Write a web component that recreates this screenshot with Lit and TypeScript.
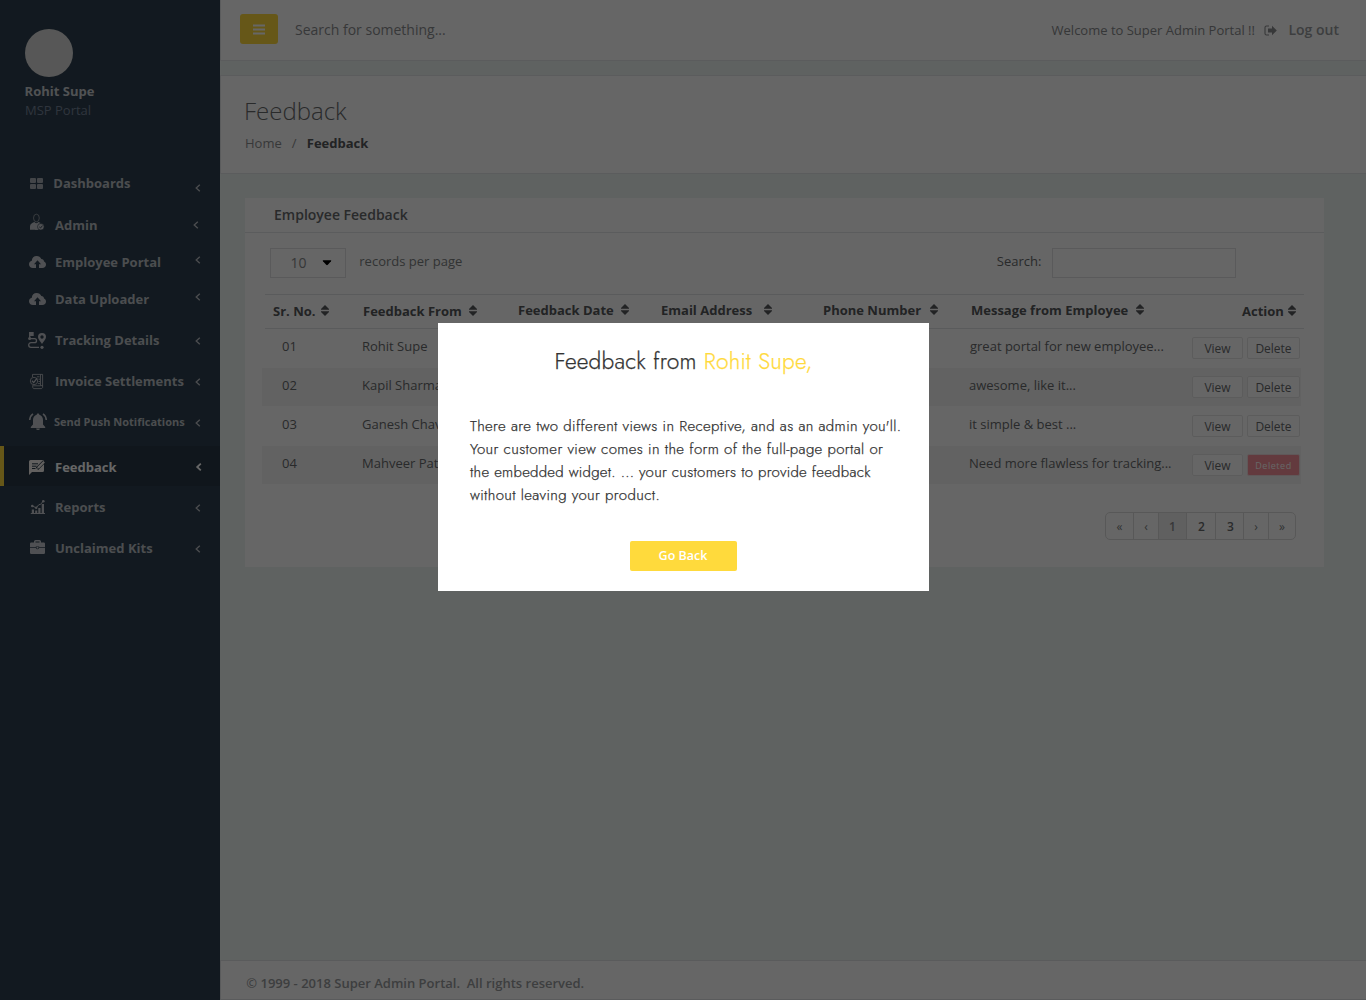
import { LitElement, html, css, svg } from 'lit';
import { customElement, state } from 'lit/decorators.js';
import { classMap } from 'lit/directives/class-map.js';

const cloud = svg`<path fill="currentColor" fill-rule="evenodd" d="M5 16C2.6 16 1 14.5 1 12.300C1 10.500 2.100 9.200 3.800 8.800C3.900 6 5.900 4 8.700 4C10.800 4 12.500 5.100 13.300 6.900C14.900 6.900 16 8 16 9.500C17.300 10 18 11 18 12.500C18 14.600 16.500 16 14.300 16H11V12.300H13L9.500 8.300L6 12.300H8V16Z"/>`;

const icons = {
  grid: svg`<g fill="currentColor" opacity=".8"><rect x="2" y="5" width="6" height="5" rx="1"/><rect x="9" y="5" width="6" height="5" rx="1"/><rect x="2" y="11" width="6" height="5" rx="1"/><rect x="9" y="11" width="6" height="5" rx="1"/></g>`,
  admin: svg`<ellipse cx="8.400" cy="3" rx="2.900" ry="3.800" fill="none" stroke="currentColor" stroke-width=".6"/><path fill="currentColor" d="M2 14.800V11.500C2 8.800 4 8.200 6.300 7L8.400 8.600L10.500 7L12.600 8C10 8.400 8.600 10.300 9 12.300C9.100 13.300 9.700 14.200 10.500 14.800Z"/><path fill="currentColor" d="M8 8.500L12 8.300L10.500 14.800H7Z"/><circle cx="12.800" cy="11.800" r="3.300" fill="currentColor" stroke="#2f4050" stroke-width=".6"/><path d="M11.300 11.900L12.500 13L14.500 10.600" fill="none" stroke="#2f4050" stroke-width=".9"/>`,
  cloud,
  track: svg`<g fill="none" stroke="currentColor" stroke-width="1.300"><path d="M1.700 2V9.500M3 8.700H6.500A2 2 0 0 1 6.500 12.700H3A2.250 2.250 0 0 0 3 17.300H11"/></g><path fill="currentColor" d="M1.500 2H5.700V6H1.500Z"/><circle cx="1.600" cy="8.600" r="1.500" fill="currentColor"/><path fill="currentColor" fill-rule="evenodd" d="M14 3A4 4 0 0 0 10 7C10 9.500 12.700 11.500 14 14C15.300 11.500 18 9.500 18 7A4 4 0 0 0 14 3ZM14 5.300A1.700 1.700 0 1 1 14 8.700A1.700 1.700 0 0 1 14 5.300Z"/><circle cx="14" cy="17.300" r="1.600" fill="currentColor"/>`,
  invoice: svg`<g fill="none" stroke="currentColor" stroke-width=".8"><path d="M4.500 6V3.400H14.600V16.500L13.600 17.600H5.800C4.800 17.400 4.700 16.500 4.600 14.500M12.500 3.400V14.600H14.600M4.600 14.800H12.500"/><circle cx="6" cy="10" r="3.700"/><path stroke-width="1.300" d="M4 9.800L5.700 11.600L9 7.400"/><path d="M9 5.800H11.500M10.500 8.200H12M10.500 10.500H12M10 12.600H12"/></g>`,
  bell: svg`<g fill="currentColor"><path d="M10 1.500C10.800 1.500 11.200 2 11.300 2.800C13.700 3.500 15 5.400 15 8V12.500L17.200 15V16H2.800V15L5 12.500V8C5 5.400 6.300 3.500 8.700 2.800C8.800 2 9.200 1.500 10 1.500Z"/><path d="M8.100 16.600H11.900A1.900 1.500 0 0 1 8.100 16.600Z"/></g><path d="M5 1.800Q2 3.800 1.700 8M15 1.800Q18 3.800 18.300 8" fill="none" stroke="currentColor" stroke-width="1.600"/>`,
  feedback: svg`<path fill="currentColor" d="M2.500 3H14.500Q16 3 16 4.500V13.500Q16 15 14.500 15H4L1 18V4.500Q1 3 2.500 3Z"/><path d="M4 6.800H10M4 9.200H8.500M4 11.500H7.500" stroke="#293846" stroke-width="1" fill="none"/><path d="M9 11.800L16 4.800" stroke="#293846" stroke-width="3.400" fill="none"/><path d="M9 11.800L9.600 9.700L15.300 4L16.900 5.600L11.200 11.300Z" fill="currentColor"/>`,
  chart: svg`<g fill="currentColor"><path d="M2.800 16H17V17H2.800ZM3.800 12.500H6V17H3.800ZM7.200 13.500H9.200V17H7.200ZM10.300 11H12.500V17H10.300ZM13.700 7H16V17H13.700Z"/><circle cx="4.300" cy="9" r="1.300"/><circle cx="8.200" cy="10.800" r="1.200"/><circle cx="15.300" cy="4.200" r="1.300"/></g><path d="M4.300 9L8.200 10.800L11 7.500L12.200 7.700L15.300 4.200" fill="none" stroke="currentColor" stroke-width="1"/>`,
  case: svg`<path fill="currentColor" fill-rule="evenodd" d="M6 4.500V3.500Q6 2 7.500 2H11.500Q13 2 13 3.500V4.500H15.800Q17 4.500 17 5.700V9H11.200V8.500H7.800V9H2V5.700Q2 4.500 3.200 4.500ZM7.500 4.500H11.500V3.400H7.500Z"/><path fill="currentColor" d="M2 9.700H7.800Q8 11.300 9.500 11.300T11.200 9.700H17V14.800Q17 16 15.800 16H3.200Q2 16 2 14.800Z"/><rect x="8.600" y="9" width="1.800" height="1.600" fill="currentColor"/>`,
};

type IconName = keyof typeof icons;

const menu: { label: string; icon: IconName; active?: boolean }[] = [
  { label: 'Dashboards', icon: 'grid' },
  { label: 'Admin', icon: 'admin' },
  { label: 'Employee Portal', icon: 'cloud' },
  { label: 'Data Uploader', icon: 'cloud' },
  { label: 'Tracking Details', icon: 'track' },
  { label: 'Invoice Settlements', icon: 'invoice' },
  { label: 'Send Push Notifications', icon: 'bell' },
  { label: 'Feedback', icon: 'feedback', active: true },
  { label: 'Reports', icon: 'chart' },
  { label: 'Unclaimed Kits', icon: 'case' },
];

const columns = ['Sr. No.', 'Feedback From', 'Feedback Date', 'Email Address', 'Phone Number', 'Message from Employee', 'Action'];

const rows = [
  { no: '01', from: 'Rohit Supe', message: 'great portal for new employee...' },
  { no: '02', from: 'Kapil Sharma', message: 'awesome, like it...' },
  { no: '03', from: 'Ganesh Chavan', message: 'it simple & best ...' },
  { no: '04', from: 'Mahveer Patil', message: 'Need more flawless for tracking...', deleted: true },
];

@customElement('side-menu')
export class SideMenu extends LitElement {
  static styles = css`
    :host { display: block; width: 220px; background: #2f4050; font: 700 13px/18px 'Open Sans', sans-serif; }
    .profile { padding: 28.500px 24px 0 24px; height: 134.500px; }
    .avatar { width: 48px; height: 48px; border-radius: 50%; background: #d9d9d9; margin: 0 0 5.500px 1px; }
    .name { padding-left: .6px; color: #c9ccd1; }
    .role { padding: 1px 0 0 1px; color: #76849a; font-weight: 400; }
    nav { display: flex; flex-direction: column; }
    .item { display: flex; align-items: center; box-sizing: border-box; padding: 0 17px 0 28px; height: 44px; color: #bcc0c6; }
    .item:nth-child(1) { height: 40px; }
    .item:nth-child(3) { height: 30px; }
    .item:nth-child(5), .item:nth-child(7) { height: 38px; }
    .item:nth-child(9) { height: 42px; }
    .item:nth-child(10) { height: 40px; }
    .item.active { height: 40px; margin-top: 5px; padding: 2px 16.500px 0 24px; border-left: 4px solid #ffda3c; background: #293846; color: #fff; }
    .icon { width: 20px; height: 20px; overflow: visible; flex: none; color: #c6c9cf; }
    .active .icon { color: #f4f1ee; }
    .label { flex: 1; padding-left: 7px; white-space: nowrap; }
    .item:nth-child(1) .label { padding-left: 5.300px; }
    .item:nth-child(7) .label { padding-left: 6px; font-size: 11px; }
    .arrow { width: 9px; height: 10px; flex: none; }
    .item:nth-child(1) .arrow { margin-top: 10px; }
    .item:nth-child(2) .arrow { margin-right: 2px; }
    .item:nth-child(3) .arrow, .item:nth-child(4) .arrow { margin-bottom: 4px; }
    .item:nth-child(n+5) .arrow { margin-top: 2px; }
    .item.active .arrow { margin-top: 0; stroke-width: 1.800; }
  `;

  render() {
    return html`
      <div class="profile">
        <div class="avatar"></div>
        <div class="name">Rohit Supe</div>
        <div class="role">MSP Portal</div>
      </div>
      <nav>
        ${menu.map((m) => html`
          <div class=${classMap({ item: true, active: !!m.active })}>
            <svg class="icon" viewBox="0 0 20 20">${icons[m.icon]}</svg>
            <span class="label">${m.label}</span>
            <svg class="arrow" viewBox="0 0 9 10" stroke-width="1.300"><path d="M5.800 1.700L2.200 5L5.800 8.300" fill="none" stroke="currentColor"/></svg>
          </div>`)}
      </nav>`;
  }
}

@customElement('feedback-table')
export class FeedbackTable extends LitElement {
  static styles = css`
    :host { display: block; font: 400 13px/18px 'Open Sans', sans-serif; color: #676a6c; }
    .head { display: grid; grid-template-columns: 90px 155px 143px 162px 148px 271px 1fr; box-sizing: border-box;
      margin: 0 20px; padding-left: 8px; height: 35px; border: solid #e2e4e5; border-width: 1px 0; font-weight: 700; color: #55585a; }
    .col { display: flex; align-items: flex-start; padding-top: 6px; white-space: nowrap; }
    .col:nth-child(1), .col:nth-child(2), .col:nth-child(7) { padding-top: 7px; }
    .sort { width: 8px; height: 11px; margin: 3px 0 0 7.500px; flex: none; }
    .col:nth-child(1) .sort { margin-left: 5.300px; }
    .col:nth-child(4) .sort { margin-left: 11.800px; }
    .col:nth-child(5) .sort { margin-left: 8.800px; }
    .col:nth-child(6) .sort { margin-left: 8.200px; }
    .col:nth-child(7) .sort { margin-left: 4px; }
    .row { display: grid; grid-template-columns: 80px 607px 223px 1fr; align-items: start; box-sizing: border-box;
      margin: 0 23px 0 17px; padding: 8px 0 0 20px; height: 38px; white-space: nowrap; }
    .row.first { height: 39px; }
    .row.first .msg { padding-left: 1px; }
    .row.third { height: 40px; padding-top: 9px; }
    .row.even { background: #f6f6f6; }
    .actions { display: flex; gap: 4px; }
    .btn { box-sizing: border-box; width: 51px; height: 22px; border: 1px solid #e7e7e7; border-radius: 2px; background: #fff;
      font-size: 12px; line-height: 17px; padding-top: 2px; text-align: center; }
    .btn.del { width: 53px; }
    .btn.gone { background: #f7929b; border-color: #efdcde; color: #fff; font-size: 9px; letter-spacing: .55px; }
  `;

  render() {
    return html`
      <div class="head">
        ${columns.map((c) => html`<div class="col">${c}<svg class="sort" viewBox="0 0 8 11"><path fill="currentColor" d="M4 0L8 4V4.800H0V4ZM4 11L8 7V6.200H0V7Z"/></svg></div>`)}
      </div>
      ${rows.map((r, i) => html`
        <div class=${classMap({ row: true, first: i === 0, third: i === 2, even: i % 2 === 1 })}>
          <span>${r.no}</span><span>${r.from}</span><span class="msg">${r.message}</span>
          <div class="actions">
            <div class="btn">View</div>
            <div class=${classMap({ btn: true, del: true, gone: !!r.deleted })}>${r.deleted ? 'Deleted' : 'Delete'}</div>
          </div>
        </div>`)}`;
  }
}

@customElement('app-root')
export class AppRoot extends LitElement {
  static styles = css`
    :host { display: block; position: relative; height: 1000px; overflow: hidden; font: 400 13px/18px 'Open Sans', sans-serif; color: #676a6c; }
    .shell { display: flex; height: 1000px; background: #eef5f2; }
    main { flex: 1; display: flex; flex-direction: column; min-width: 0; }
    .topbar { display: flex; align-items: flex-start; box-sizing: border-box; height: 61px; padding: 14px 27px 0 19px; background: #fff;
      border: solid #e4e7e8; border-width: 0 0 1px 1px; }
    .burger { display: flex; align-items: center; justify-content: center; width: 38px; height: 30px; border-radius: 3px; background: #ffda3c; }
    .burger svg { width: 12px; height: 11px; }
    .search { flex: 1; padding: 6px 0 0 17px; font-size: 14px; line-height: 19px; color: #8b8d8f; }
    .welcome { padding-top: 7px; color: #888a8c; }
    .exit { width: 13px; height: 11px; margin: 11px 11px 0 9.500px; color: #8b8d8f; }
    .logout { padding-top: 6px; font-weight: 600; font-size: 14px; line-height: 19px; color: #999c9e; }
    .heading { box-sizing: border-box; height: 99px; margin-top: 14px; padding: 18px 0 0 24px; background: #fff;
      border: solid #e4e7e8; border-width: 1px 0 1px 1px; }
    h1 { margin: 0 0 7px -1px; font-weight: 300; font-size: 24px; line-height: 33px; }
    .crumbs { display: flex; color: #8b8d8f; }
    .slash { width: 25px; text-align: center; }
    .crumbs b { color: #55585a; }
    .card { box-sizing: border-box; width: 1079px; height: 369px; margin: 24px 0 0 25px; background: #fff; }
    .card h2 { box-sizing: border-box; height: 35px; margin: 0; padding: 7px 0 0 29px; border-bottom: 1px solid #e4e7e8; font-weight: 600; font-size: 14px; line-height: 19px; }
    .tools { display: flex; box-sizing: border-box; height: 61px; padding: 15px 88px 0 25px; }
    .select { display: flex; align-items: center; box-sizing: border-box; width: 76px; height: 30px; padding: 0 13.500px 0 19.500px; justify-content: space-between;
      border: 1px solid #e0e2e3; font-size: 14px; color: #888a8c; }
    .select svg { width: 10px; height: 6px; }
    .per { flex: 1; padding: 4px 0 0 13.300px; color: #7c7f81; }
    .find { padding: 4px 10.600px 0 0; }
    .field { box-sizing: border-box; width: 184px; height: 30px; border: 1px solid #e0e2e3; }
    .pager { display: flex; box-sizing: border-box; width: 191px; height: 28px; margin: 28px 0 0 860px; border: 1px solid #dcdcdc; border-radius: 5px;
      font-size: 12px; font-weight: 600; line-height: 27px; text-align: center; }
    .pager span { box-sizing: border-box; width: 28px; border-left: 1px solid #dcdcdc; }
    .pager span:first-child { border-left: 0; width: 27px; }
    .pager span:nth-child(2), .pager span:nth-child(6) { width: 25px; }
    .pager span:nth-child(4) { width: 29px; padding-left: 1px; }
    .pager span:nth-child(5) { padding-left: 2px; }
    .pager span:nth-child(7) { width: 27px; }
    .pager .on { background: #efefef; color: #8b8d8f; }
    .pager .nav { font-weight: 400; color: #7c7f81; }
    footer { box-sizing: border-box; height: 40px; margin-top: auto; padding: 13px 0 0 25.300px; background: #fff; border: solid #e0e4e5; border-width: 1px 0 1px 1px;
      font-weight: 600; color: #999c9e; white-space: pre; }
    .shade { position: absolute; inset: 0; background: rgba(0, 0, 0, .6); }
    .modal { position: absolute; left: 438px; top: 323px; display: flex; flex-direction: column; align-items: center; box-sizing: border-box; width: 491px; height: 268px;
      background: #fff; color: #333; font-family: 'Jost', 'Lato', sans-serif; font-weight: 300; }
    .title, .copy { -webkit-text-stroke: .25px currentColor; white-space: nowrap; }
    .title { margin-top: 23px; font-size: 22.800px; line-height: 32px; letter-spacing: .2px; }
    .title em { font-style: normal; color: #ffda3c; }
    .copy { align-self: stretch; margin: 37px 0 0 32px; font-size: 15px; line-height: 23px; letter-spacing: .37px; }
    .tight { letter-spacing: .275px; }
    .back { width: 107px; height: 30px; margin-top: 34px; border-radius: 2px; background: #ffda3c; color: #fff;
      font: 600 12.500px/29px 'Open Sans', sans-serif; text-align: center; text-indent: -1px; }
  `;

  @state() private open = true;

  render() {
    return html`
      <div class="shell">
        <side-menu></side-menu>
        <main>
          <div class="topbar">
            <div class="burger"><svg viewBox="0 0 12 11"><path fill="#fff" d="M0 .5H12V2.500H0ZM0 4.500H12V6.500H0ZM0 8.500H12V10.500H0Z"/></svg></div>
            <div class="search">Search for something...</div>
            <div class="welcome">Welcome to Super Admin Portal !!</div>
            <svg class="exit" viewBox="0 0 13 11"><path d="M5 1H2.500Q1 1 1 2.500V8.500Q1 10 2.500 10H5" fill="none" stroke="currentColor" stroke-width="1.100"/><path fill="currentColor" d="M4 3.500H8V.8L12.800 5.500L8 10.200V7.500H4Z"/></svg>
            <div class="logout">Log out</div>
          </div>
          <div class="heading">
            <h1>Feedback</h1>
            <div class="crumbs"><span>Home</span><span class="slash">/</span><b>Feedback</b></div>
          </div>
          <section class="card">
            <h2>Employee Feedback</h2>
            <div class="tools">
              <div class="select">10<svg viewBox="0 0 10 6"><path d="M1.200 .3H8.800Q9.700 .5 9 1.300L5.800 4.800Q5 5.500 4.200 4.800L1 1.300Q.3 .5 1.200 .3Z"/></svg></div>
              <div class="per">records per page</div>
              <div class="find">Search:</div>
              <div class="field"></div>
            </div>
            <feedback-table></feedback-table>
            <div class="pager">
              <span class="nav">«</span><span class="nav">‹</span><span class="on">1</span><span>2</span><span>3</span><span class="nav">›</span><span class="nav">»</span>
            </div>
          </section>
          <footer>© 1999 - 2018 Super Admin Portal.  All rights reserved.</footer>
        </main>
      </div>
      ${this.open ? html`
        <div class="shade"></div>
        <div class="modal">
          <div class="title">Feedback from <em>Rohit Supe,</em></div>
          <div class="copy">There are two different views in Receptive, and as an admin you'll.<br>Your customer view comes in the form of the full-page portal or<br><span class="tight">the embedded widget. ... your customers to provide feedback</span><br>without leaving your product.</div>
          <div class="back" @click=${() => { this.open = false; }}>Go Back</div>
        </div>` : null}`;
  }
}
